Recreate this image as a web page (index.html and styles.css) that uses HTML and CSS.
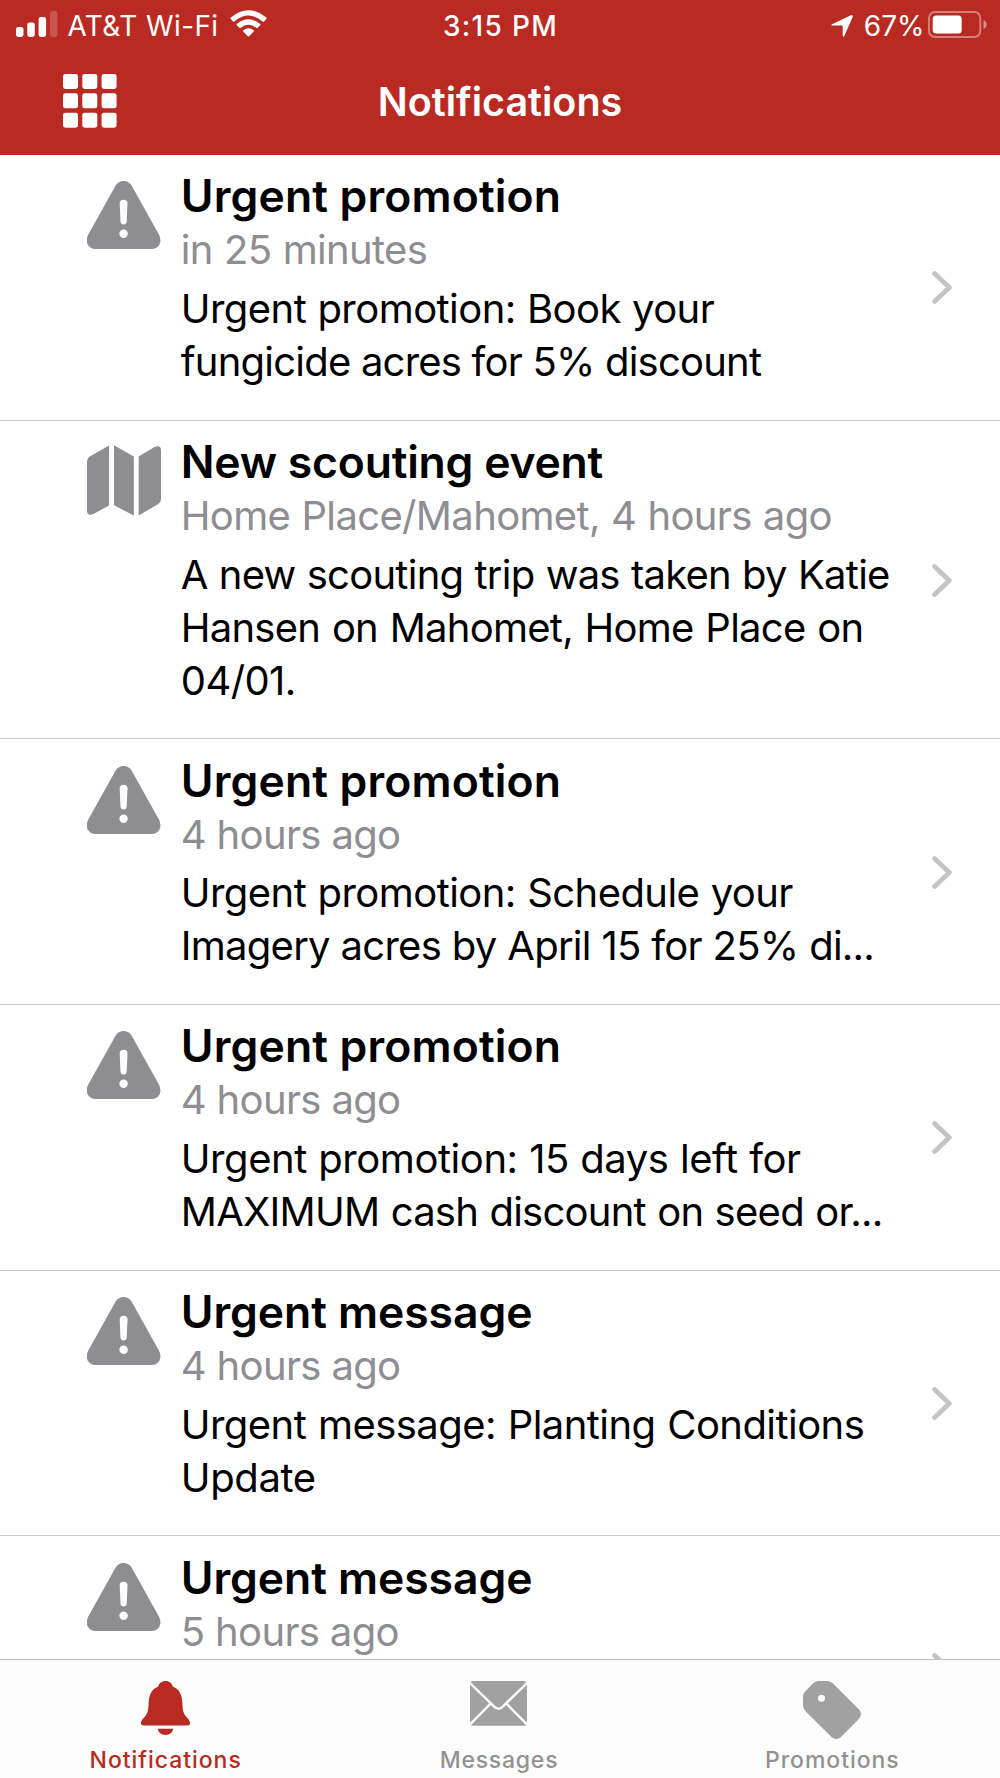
FILE: index.html
```html
<!DOCTYPE html>
<html lang="en">
<head>
<meta charset="utf-8">
<title>Notifications</title>
<link rel="stylesheet" href="styles.css">
</head>
<body>
<svg class="defs" aria-hidden="true">
  <symbol id="warning" viewBox="0 0 74 68">
    <path fill="#8e8d92" d="M28.600 4.600Q31.400 0 36.600 0T44.600 4.600L71.900 53.600Q74.500 58.500 72.600 63.300Q70.300 68 64.500 68H8.700Q2.900 68 .6 63.300Q-1.300 58.500 1.300 53.600Z"/>
    <path fill="#fff" d="M32.700 22.500Q32.700 18.800 36.600 18.800T40.500 22.500L39.700 40.300Q39.500 43.500 36.600 43.500T33.500 40.300Z"/>
    <circle fill="#fff" cx="36.600" cy="52.700" r="4.200"/>
  </symbol>
  <symbol id="map" viewBox="0 0 74 71">
    <path fill="#8e8d92" d="M22 .4V60.500L6.500 69Q0 71.500 0 65.500V17.500Q0 13.300 2.800 11.500ZM27 .2L46.800 11.500V70.600L27 60.300ZM51.700 11.500L67.500 2Q74 -.8 74 5.500V53.500Q74 57.300 71.300 59L51.700 70.600Z"/>
  </symbol>
  <symbol id="chevron" viewBox="0 0 20 33">
    <path fill="none" stroke="#c4c4c7" stroke-width="4.800" stroke-linecap="round" stroke-linejoin="round" d="M2.600 2.600L17.300 16.500L2.600 30.400"/>
  </symbol>
</svg>
<div class="screen">
  <header class="header">
    <div class="status">
      <div class="status-left">
        <svg class="signal" viewBox="0 0 42 27" fill="#fff"><rect x="0" y="16" width="7.500" height="10" rx="2.400"/><rect x="11.300" y="11.500" width="7.500" height="14.500" rx="2.400"/><rect x="22.600" y="6" width="7.500" height="20" rx="2.400"/><rect x="34" y="0" width="7.500" height="26" rx="2.400" opacity=".2"/></svg>
        <span class="carrier">AT&amp;T Wi-Fi</span>
        <svg class="wifi" viewBox="0 0 37 27" fill="#fff"><path d="M.7 7.600Q18.500 -7.300 36.300 7.600Q37 8.300 36.300 9L34 11.400Q33.300 12 32.600 11.400Q18.500 -.3 4.400 11.400Q3.700 12 3 11.400L.7 9Q0 8.300 .7 7.600Z"/><path d="M6.800 13.900Q18.500 4.600 30.200 13.900Q30.900 14.600 30.200 15.300L27.700 17.700Q27 18.300 26.300 17.700Q18.500 11.600 10.700 17.700Q10 18.300 9.300 17.700L6.800 15.300Q6.100 14.600 6.800 13.900Z"/><path d="M13.300 20.200Q18.500 16.300 23.700 20.200Q24.500 20.800 23.700 21.600L19.200 26.200Q18.500 26.800 17.800 26.200L13.300 21.600Q12.500 20.800 13.300 20.200Z"/></svg>
      </div>
      <span class="clock">3:15 PM</span>
      <div class="status-right">
        <svg class="location" viewBox="0 0 22 22"><path fill="#fff" d="M1 9.300L20 .3Q22.300 -.3 21.700 2L13.300 21Q12.600 22.300 11.700 21V11.500Q11.700 10.600 10.800 10.600H1Q-.4 10.200 1 9.300Z"/></svg>
        <span class="percent">67%</span>
        <svg class="battery" viewBox="0 0 59 28"><rect x="1" y="1" width="51.300" height="25" rx="6" fill="none" stroke="#fff" stroke-opacity=".4" stroke-width="2"/><rect x="4.700" y="4.500" width="29" height="18" rx="3.500" fill="#fff"/><path fill="#fff" fill-opacity=".45" d="M55.500 9Q58.700 10.500 58.700 13.500T55.500 18Z"/></svg>
      </div>
    </div>
    <div class="navbar">
      <svg class="grid" viewBox="0 0 54 54" fill="#fff"><rect width="15" height="15" rx="2.400"/><rect x="19.300" width="15" height="15" rx="2.400"/><rect x="38.600" width="15" height="15" rx="2.400"/><rect y="19.300" width="15" height="15" rx="2.400"/><rect x="19.300" y="19.300" width="15" height="15" rx="2.400"/><rect x="38.600" y="19.300" width="15" height="15" rx="2.400"/><rect y="38.700" width="15" height="15" rx="2.400"/><rect x="19.300" y="38.700" width="15" height="15" rx="2.400"/><rect x="38.600" y="38.700" width="15" height="15" rx="2.400"/></svg>
      <h1 class="heading">Notifications</h1>
      <span></span>
    </div>
  </header>
  <main class="list">
    <article class="row">
      <svg class="icon"><use href="#warning"/></svg>
      <div class="text">
        <h2 class="title promo">Urgent promotion</h2>
        <p class="meta">in 25 minutes</p>
        <p class="body"><span class="line book">Urgent promotion: Book your</span><span class="line fungicide">fungicide acres for 5% discount</span></p>
      </div>
      <svg class="chevron"><use href="#chevron"/></svg>
    </article>
    <article class="row tall">
      <svg class="icon map"><use href="#map"/></svg>
      <div class="text">
        <h2 class="title scouting">New scouting event</h2>
        <p class="meta">Home Place/Mahomet, 4 hours ago</p>
        <p class="body"><span class="line w07">A new scouting trip was taken by Katie</span><span class="line w1">Hansen on Mahomet, Home Place on</span><span class="line date">04/01.</span></p>
      </div>
      <svg class="chevron"><use href="#chevron"/></svg>
    </article>
    <article class="row">
      <svg class="icon"><use href="#warning"/></svg>
      <div class="text">
        <h2 class="title promo">Urgent promotion</h2>
        <p class="meta hours">4 hours ago</p>
        <p class="body"><span class="line schedule">Urgent promotion: Schedule your</span><span class="line w03">Imagery acres by April 15 for 25% di...</span></p>
      </div>
      <svg class="chevron"><use href="#chevron"/></svg>
    </article>
    <article class="row">
      <svg class="icon"><use href="#warning"/></svg>
      <div class="text">
        <h2 class="title promo">Urgent promotion</h2>
        <p class="meta hours">4 hours ago</p>
        <p class="body"><span class="line days">Urgent promotion: 15 days left for</span><span class="line maximum">MAXIMUM cash discount on seed or...</span></p>
      </div>
      <svg class="chevron"><use href="#chevron"/></svg>
    </article>
    <article class="row">
      <svg class="icon"><use href="#warning"/></svg>
      <div class="text">
        <h2 class="title message">Urgent message</h2>
        <p class="meta hours">4 hours ago</p>
        <p class="body"><span class="line planting">Urgent message: Planting Conditions</span><span class="line update">Update</span></p>
      </div>
      <svg class="chevron"><use href="#chevron"/></svg>
    </article>
    <article class="row">
      <svg class="icon"><use href="#warning"/></svg>
      <div class="text">
        <h2 class="title message">Urgent message</h2>
        <p class="meta hours">5 hours ago</p>
      </div>
      <svg class="chevron"><use href="#chevron"/></svg>
    </article>
  </main>
  <nav class="tabs">
    <div class="tab active">
      <svg class="tab-icon bell" viewBox="0 0 49 54" fill="#b92a23"><path d="M24.500 0C28.300 0 31 2.300 31.800 5.500C38.500 8.300 41 14 41.300 21C41.600 29 42.300 32.500 45 35.500L47.700 38.500Q49 40 49 42Q49 44.500 46.300 44.500H2.700Q0 44.500 0 42Q0 40 1.300 38.500L4 35.500C6.700 32.500 7.400 29 7.700 21C8 14 10.500 8.300 17.200 5.500C18 2.300 20.700 0 24.500 0Z"/><path d="M16.800 47.800H32.200C31.700 51.700 28.500 54 24.500 54S17.300 51.700 16.800 47.800Z"/></svg>
      <span class="label">Notifications</span>
    </div>
    <div class="tab">
      <svg class="tab-icon mail" viewBox="0 0 57 45"><rect width="57" height="44.700" rx="3.500" fill="#a1a1a1"/><path fill="none" stroke="#fcfcfc" stroke-width="2.400" d="M0 2L24.500 25.800Q28.500 29.500 32.500 25.800L57 2M0 43.500L20.800 22.400M57 43.500L36.200 22.400"/></svg>
      <span class="label messages">Messages</span>
    </div>
    <div class="tab">
      <svg class="tab-icon tag" viewBox="0 0 58 58"><path fill="#a1a1a1" d="M0 15.500Q0 12.500 2.200 10.400L10 2.500Q12.300 0 15.500 0H24Q27.500 0 30 2.500L56 28.500Q60 33 56 37.800L38 56Q33.300 60 28.500 56L2.300 30Q0 27.700 0 24.500Z"/><circle cx="18.500" cy="17.200" r="3.500" fill="#fcfcfc"/></svg>
      <span class="label">Promotions</span>
    </div>
  </nav>
</div>
</body>
</html>
```
FILE: styles.css
```css
* { box-sizing: border-box; }
body { margin: 0; background: #fff; font-family: Inter, "Liberation Sans", sans-serif; color: #000; }
h1, h2, p { margin: 0; }
svg { display: block; flex: none; }
.defs { width: 0; height: 0; display: none; }
.screen { width: 1000px; height: 1778px; display: flex; flex-direction: column; overflow: hidden; }

.header { flex: none; height: 155px; background: #b92a23; color: #fff; }
.status { height: 51px; display: grid; grid-template-columns: 1fr auto 1fr; align-items: center; padding: 0 13px 0 16px; font-size: 28px; line-height: 34px; }
.status-left, .status-right { display: flex; align-items: center; }
.status-right { justify-content: flex-end; }
.signal { width: 42px; height: 27px; margin-right: 9.500px; margin-top: -2px; }
.carrier { letter-spacing: .4px; }
.wifi { width: 37px; height: 27px; margin-left: 11.500px; margin-top: -4px; }
.clock { font-weight: 500; letter-spacing: 1.300px; margin-left: -2px; }
.location { width: 22px; height: 22px; margin-right: 11px; }
.battery { width: 59px; height: 28px; margin-left: 3.500px; margin-top: -1px; }
.navbar { height: 103px; display: grid; grid-template-columns: 1fr auto 1fr; align-items: start; padding: 23px 62.700px 0; }
.grid { width: 54px; height: 54px; }
.heading { font-size: 39.500px; line-height: 54px; font-weight: 600; margin-top: 1px; }

.list { flex: 1; min-height: 0; overflow: hidden; }
.row { height: 265.670px; display: flex; align-items: flex-start; padding: 15.300px 48px 0 87px; border-bottom: 1.300px solid #cdcccf; }
.row.tall { height: 318.700px; }
.icon { width: 74px; height: 68px; margin-top: 11px; margin-right: 19.800px; }
.icon.map { height: 71px; margin-top: 9px; }
.text { flex: 1; min-width: 0; white-space: nowrap; }
.title { font-size: 44.500px; line-height: 53px; font-weight: 600; }
.title.promo { letter-spacing: .14px; }
.title.scouting { letter-spacing: -.23px; }
.title.message { letter-spacing: -.08px; }
.meta { font-size: 40px; line-height: 53.200px; color: #8e8d92; letter-spacing: -.65px; word-spacing: .6px; }
.meta.hours { word-spacing: 0; }
.body { margin-top: 5.400px; font-size: 40px; line-height: 53.200px; letter-spacing: -.75px; }
.line { display: block; }
.w03 { word-spacing: .3px; }
.w07 { word-spacing: .7px; }
.w1 { word-spacing: 1.200px; }
.book { letter-spacing: -.55px; word-spacing: .5px; }
.schedule { letter-spacing: -.55px; word-spacing: .6px; }
.days { letter-spacing: -.45px; word-spacing: .7px; }
.planting { letter-spacing: -.55px; word-spacing: 1px; }
.maximum { letter-spacing: -.75px; word-spacing: .8px; }
.fungicide { letter-spacing: -.78px; }
.date { letter-spacing: -.6px; }
.update { letter-spacing: -.38px; }
.chevron { width: 20px; height: 33px; align-self: center; margin-top: -14px; }

.tabs { flex: none; height: 119.500px; display: grid; grid-template-columns: repeat(3, 1fr); background: #fcfcfc; border-top: 1.500px solid #bdbdbd; }
.tab { display: flex; flex-direction: column; align-items: center; justify-content: space-between; padding: 21.500px 2px 3px 0; color: #929292; }
.tab.active { color: #b92a23; }
.bell { width: 49px; height: 54px; }
.mail { width: 57px; height: 45px; }
.tag { width: 58px; height: 58px; }
.label { font-size: 23px; line-height: 30px; font-weight: 500; letter-spacing: .95px; }
.label.messages { letter-spacing: .77px; }
```
